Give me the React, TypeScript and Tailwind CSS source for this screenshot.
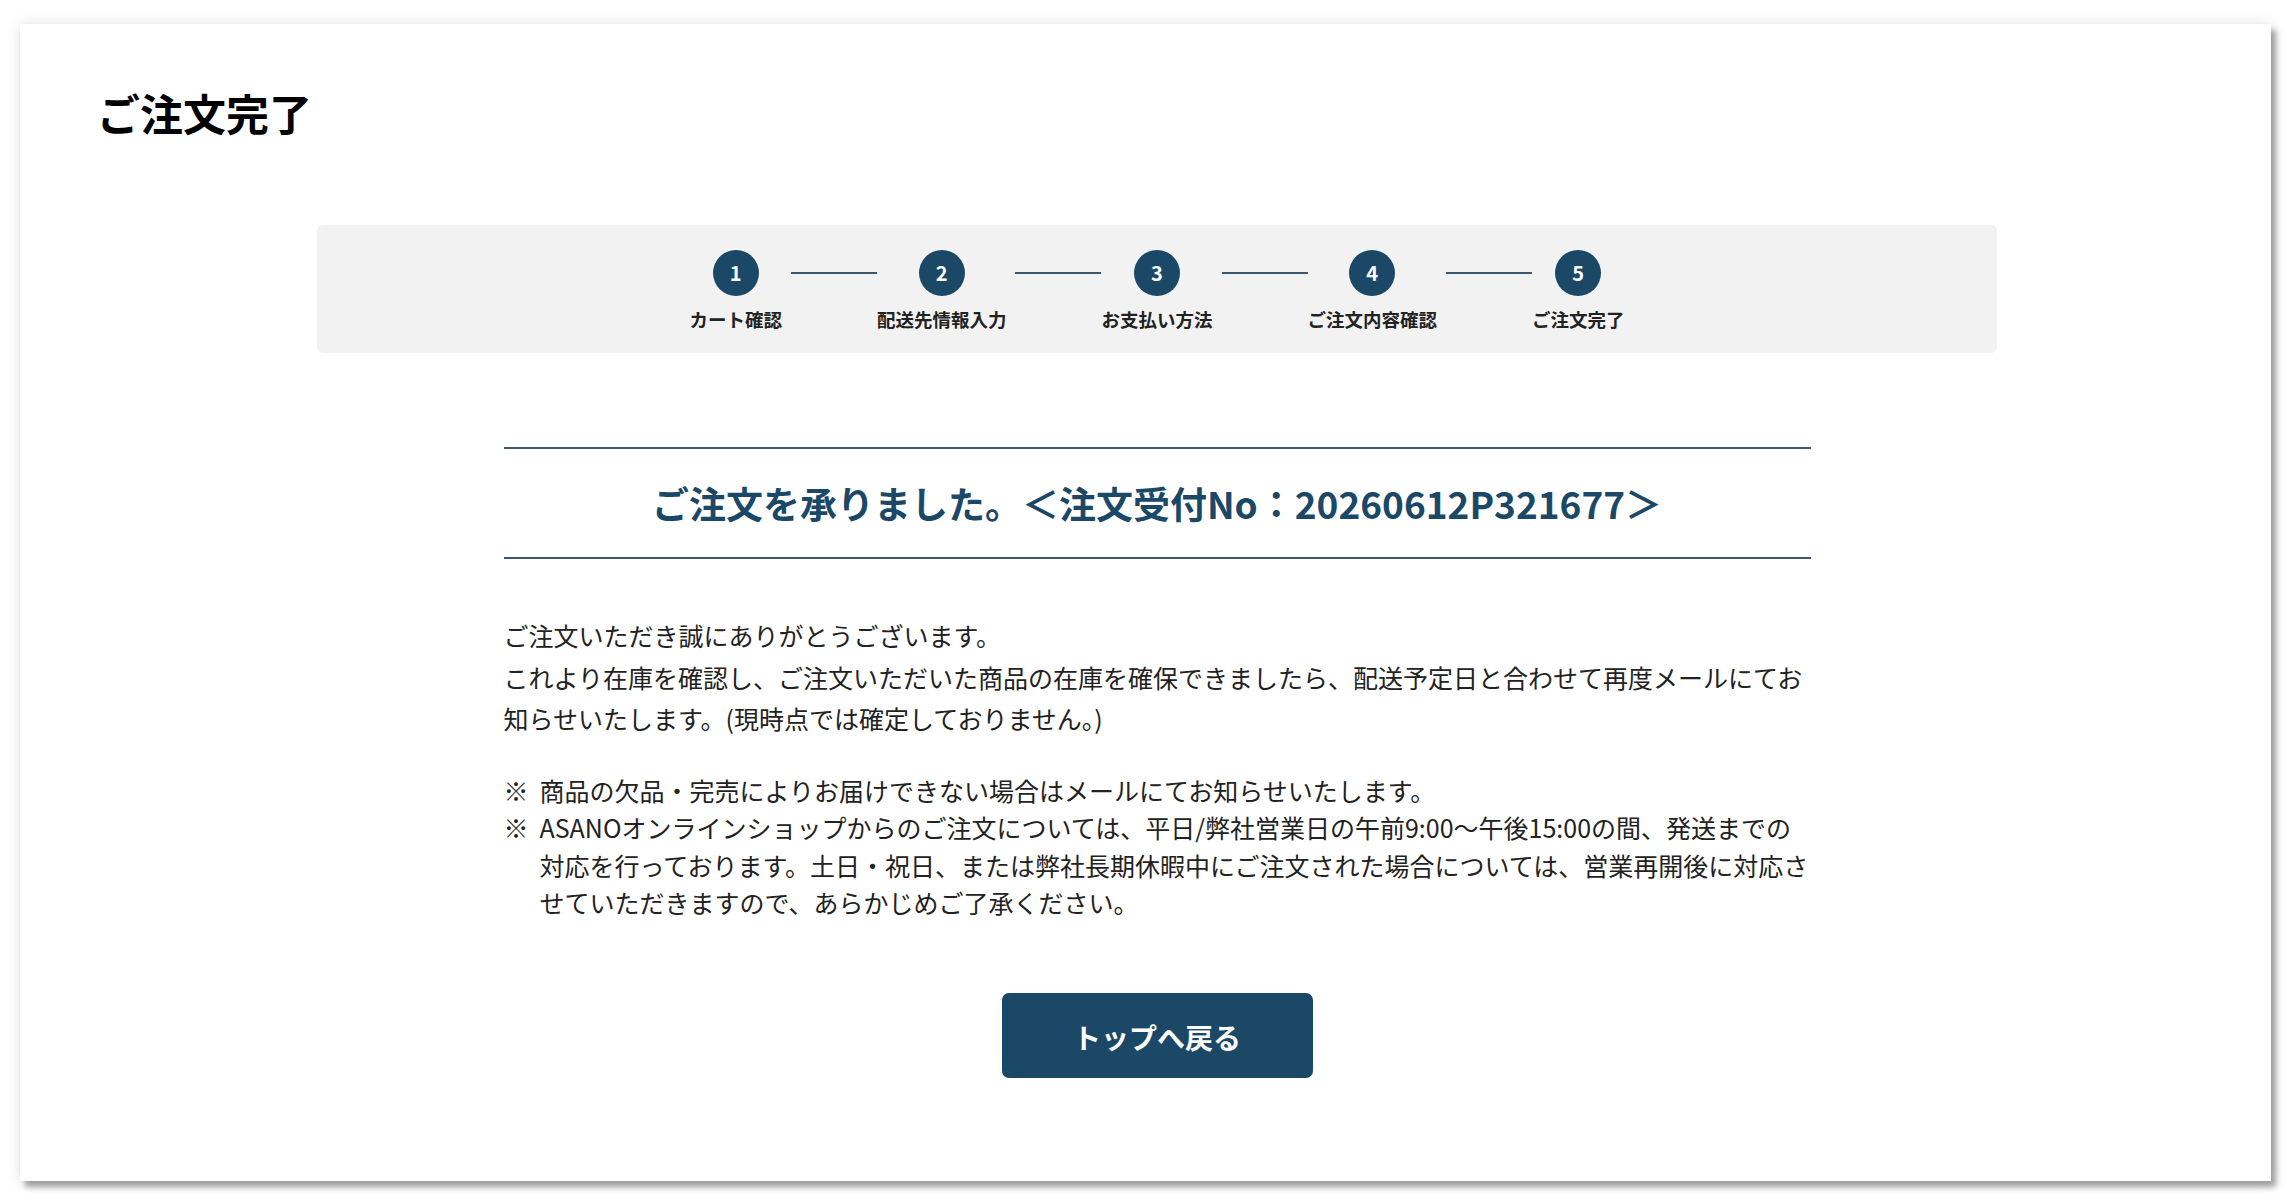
import React from "react";

const steps = ["カート確認", "配送先情報入力", "お支払い方法", "ご注文内容確認", "ご注文完了"];

const notes = [
  "商品の欠品・完売によりお届けできない場合はメールにてお知らせいたします。",
  "ASANOオンラインショップからのご注文については、平日/弊社営業日の午前9:00〜午後15:00の間、発送までの対応を行っております。土日・祝日、または弊社長期休暇中にご注文された場合については、営業再開後に対応させていただきますので、あらかじめご了承ください。",
];

const StepBar = () => (
  <div className="w-[1680px] h-[128px] mx-auto bg-[#f2f2f2] rounded-[6px] flex justify-center items-start pt-[25px]">
    {steps.map((label, i) => (
      <React.Fragment key={label}>
        <div className="flex flex-col items-center">
          <div className="w-[46px] h-[46px] rounded-full bg-[#1c4868] text-white flex items-center justify-center text-[20px] font-bold leading-none">
            {i + 1}
          </div>
          <span className="mt-[10px] text-[18.5px] leading-[27px] font-bold text-[#222] whitespace-nowrap">
            {label}
          </span>
        </div>
        {i < steps.length - 1 && (
          <div className="ml-[9px] mt-[22px] w-[86px] h-[2px] bg-[#3c5871]" />
        )}
      </React.Fragment>
    ))}
  </div>
);

export default function App() {
  return (
    <div
      className="min-h-screen bg-white pt-[24px] pl-[20px] pr-[21px]"
      style={{ fontFamily: '"Noto Sans CJK JP", "Noto Sans", sans-serif' }}
    >
      <div className="bg-white shadow-[0_0_14px_rgba(0,0,0,0.12),5px_6px_6px_rgba(0,0,0,0.35)] pt-[57px] pb-[103px] pl-[77px] pr-[54px]">
        {/* Page title */}
        <h1 className="text-[43px] leading-[63px] font-bold text-black">ご注文完了</h1>

        {/* Steps */}
        <div className="mt-[81px]">
          <StepBar />
        </div>

        <div className="w-[1307px] mx-auto mt-[94px]">
          {/* Heading */}
          <div className="border-y-2 border-[#3c5871] py-[26px] text-center">
            <h2 className="text-[37px] leading-[56px] font-bold text-[#1c4868]">
              ご注文を承りました。＜注文受付No：20260612P321677＞
            </h2>
          </div>

          {/* Message */}
          <p className="mt-[56px] text-[25px] leading-[41.5px] text-[#222]">
            ご注文いただき誠にありがとうございます。
            <br />
            これより在庫を確認し、ご注文いただいた商品の在庫を確保できましたら、配送予定日と合わせて再度メールにてお知らせいたします。(現時点では確定しておりません。)
          </p>

          {/* Notes */}
          <ul className="mt-[32px] text-[25px] leading-[37.5px] text-[#222]">
            {notes.map((n) => (
              <li key={n} className="flex">
                <span className="w-[36px] shrink-0">※</span>
                <span>{n}</span>
              </li>
            ))}
          </ul>

          <div className="mt-[71px] flex justify-center">
            <button className="w-[311px] h-[85px] pt-[4px] rounded-[7px] bg-[#1c4868] text-white text-[28px] font-bold">
              トップへ戻る
            </button>
          </div>
        </div>
      </div>
    </div>
  );
}
